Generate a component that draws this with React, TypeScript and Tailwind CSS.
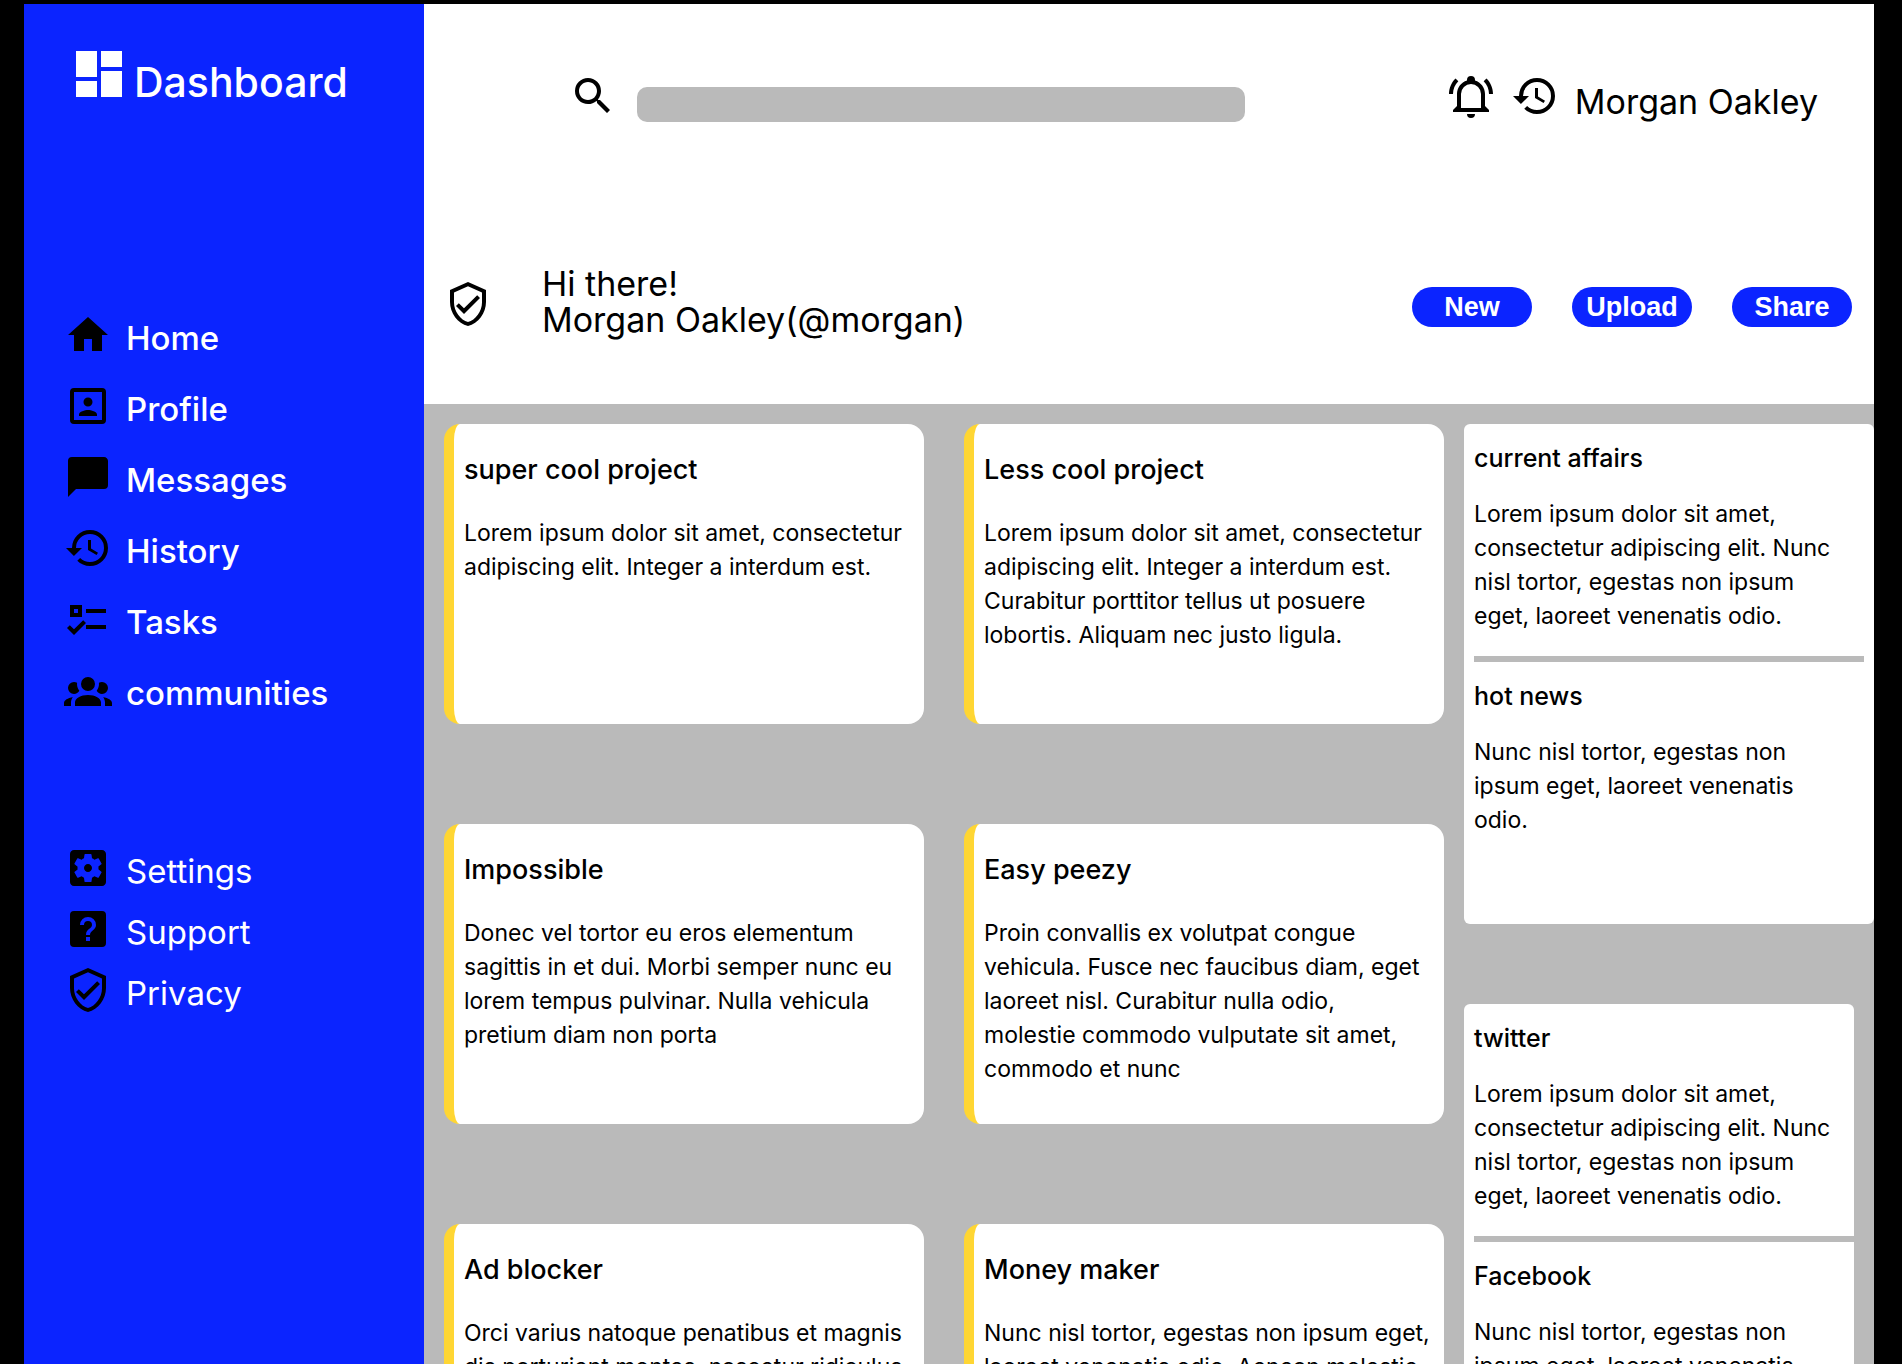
const icons = {
  home: "M10,20V14H14V20H19V12H22L12,3L2,12H5V20H10Z",
  profile:
    "M19,19H5V5H19M19,3H5A2,2 0 0,0 3,5V19A2,2 0 0,0 5,21H19A2,2 0 0,0 21,19V5A2,2 0 0,0 19,3M16.5,16.25C16.5,14.75 13.5,14 12,14C10.5,14 7.5,14.75 7.5,16.25V17H16.5M12,12.25A2.25,2.25 0 0,0 14.25,10A2.25,2.25 0 0,0 12,7.75A2.25,2.25 0 0,0 9.75,10A2.25,2.25 0 0,0 12,12.25Z",
  message: "M20,2H4A2,2 0 0,0 2,4V22L6,18H20A2,2 0 0,0 22,16V4C22,2.89 21.1,2 20,2Z",
  history:
    "M13.5,8H12V13L16.28,15.54L17,14.33L13.5,12.25V8M13,3A9,9 0 0,0 4,12H1L4.96,16.03L9,12H6A7,7 0 0,1 13,5A7,7 0 0,1 20,12A7,7 0 0,1 13,19C11.07,19 9.32,18.21 8.06,16.94L6.64,18.36C8.27,20 10.5,21 13,21A9,9 0 0,0 22,12A9,9 0 0,0 13,3",
  tasks:
    "M3,5H9V11H3V5M5,7V9H7V7H5M11,7H21V9H11V7M11,15H21V17H11V15M5,20L1.5,16.5L2.91,15.09L5,17.17L9.59,12.59L11,14L5,20Z",
  group:
    "M12,5.5A3.5,3.5 0 0,1 15.5,9A3.5,3.5 0 0,1 12,12.5A3.5,3.5 0 0,1 8.5,9A3.5,3.5 0 0,1 12,5.5M5,8C5.56,8 6.08,8.15 6.53,8.42C6.38,9.85 6.8,11.27 7.66,12.38C7.16,13.34 6.16,14 5,14A3,3 0 0,1 2,11A3,3 0 0,1 5,8M19,8A3,3 0 0,1 22,11A3,3 0 0,1 19,14C17.84,14 16.84,13.34 16.34,12.38C17.2,11.27 17.62,9.85 17.47,8.42C17.92,8.15 18.44,8 19,8M5.5,18.25C5.5,16.18 8.41,14.5 12,14.5C15.59,14.5 18.5,16.18 18.5,18.25V20H5.5V18.25M0,20V18.5C0,17.11 1.89,15.94 4.45,15.6C3.86,16.28 3.5,17.22 3.5,18.25V20H0M24,20H20.5V18.25C20.5,17.22 20.14,16.28 19.55,15.6C22.11,15.94 24,17.11 24,18.5V20Z",
  settings:
    "M12 10c-1.1 0-2 .9-2 2s.9 2 2 2 2-.9 2-2-.9-2-2-2zm7-7H5c-1.11 0-2 .9-2 2v14c0 1.1.89 2 2 2h14c1.11 0 2-.9 2-2V5c0-1.1-.89-2-2-2zm-1.75 9c0 .23-.02.46-.05.68l1.48 1.16c.13.11.17.3.08.45l-1.4 2.42c-.09.15-.27.21-.43.15l-1.74-.7c-.36.28-.76.51-1.18.69l-.26 1.85c-.03.17-.18.3-.35.3h-2.8c-.17 0-.32-.13-.35-.29l-.26-1.85c-.43-.18-.82-.41-1.18-.69l-1.74.7c-.16.06-.34 0-.43-.15l-1.4-2.42c-.09-.15-.05-.34.08-.45l1.48-1.16c-.03-.23-.05-.46-.05-.69 0-.23.02-.46.05-.68l-1.48-1.16c-.13-.11-.17-.3-.08-.45l1.4-2.42c.09-.15.27-.21.43-.15l1.74.7c.36-.28.76-.51 1.18-.69l.26-1.85c.03-.17.18-.3.35-.3h2.8c.17 0 .32.13.35.29l.26 1.85c.43.18.82.41 1.18.69l1.74-.7c.16-.06.34 0 .43.15l1.4 2.42c.09.15.05.34-.08.45l-1.48 1.16c.03.23.05.46.05.69z",
  help: "M11,18H13V16H11V18M12,6A4,4 0 0,0 8,10H10A2,2 0 0,1 12,8A2,2 0 0,1 14,10C14,12 11,11.75 11,15H13C13,12.75 16,12.5 16,10A4,4 0 0,0 12,6M5,3H19A2,2 0 0,1 21,5V19A2,2 0 0,1 19,21H5A2,2 0 0,1 3,19V5A2,2 0 0,1 5,3Z",
  shield:
    "M21,11C21,16.55 17.16,21.74 12,23C6.84,21.74 3,16.55 3,11V5L12,1L21,5V11M12,21C15.75,20 19,15.54 19,11.22V6.3L12,3.18L5,6.3V11.22C5,15.54 8.25,20 12,21M10,17L6,13L7.41,11.59L10,14.17L16.59,7.58L18,9",
  search:
    "M9.5,3A6.5,6.5 0 0,1 16,9.5C16,11.11 15.41,12.59 14.44,13.73L14.71,14H15.5L20.5,19L19,20.5L14,15.5V14.71L13.73,14.44C12.59,15.41 11.11,16 9.5,16A6.5,6.5 0 0,1 3,9.5A6.5,6.5 0 0,1 9.5,3M9.5,5C7,5 5,7 5,9.5C5,12 7,14 9.5,14C12,14 14,12 14,9.5C14,7 12,5 9.5,5Z",
  bell: "M10,21H14A2,2 0 0,1 12,23A2,2 0 0,1 10,21M21,19V20H3V19L5,17V11C5,7.9 7.03,5.17 10,4.29C10,4.19 10,4.1 10,4A2,2 0 0,1 12,2A2,2 0 0,1 14,4C14,4.1 14,4.19 14,4.29C16.97,5.17 19,7.9 19,11V17L21,19M17,11A5,5 0 0,0 12,6A5,5 0 0,0 7,11V18H17V11M19.75,3.19L18.33,4.61C20.04,6.3 21,8.6 21,11H23C23,8.07 21.84,5.25 19.75,3.19M1,11H3C3,8.6 3.96,6.3 5.67,4.61L4.25,3.19C2.16,5.25 1,8.07 1,11Z",
};

type IconName = keyof typeof icons;

function Icon({ name }: { name: IconName }) {
  return (
    <svg viewBox="0 0 24 24" className="size-12 shrink-0" fill="currentColor" aria-hidden="true">
      <path fillRule="evenodd" d={icons[name]} />
    </svg>
  );
}

const mainLinks: { icon: IconName; label: string }[] = [
  { icon: "home", label: "Home" },
  { icon: "profile", label: "Profile" },
  { icon: "message", label: "Messages" },
  { icon: "history", label: "History" },
  { icon: "tasks", label: "Tasks" },
  { icon: "group", label: "communities" },
];

const moreLinks: { icon: IconName; label: string }[] = [
  { icon: "settings", label: "Settings" },
  { icon: "help", label: "Support" },
  { icon: "shield", label: "Privacy" },
];

const projects = [
  {
    title: "super cool project",
    text: "Lorem ipsum dolor sit amet, consectetur adipiscing elit. Integer a interdum est.",
  },
  {
    title: "Less cool project",
    text: "Lorem ipsum dolor sit amet, consectetur adipiscing elit. Integer a interdum est. Curabitur porttitor tellus ut posuere lobortis. Aliquam nec justo ligula.",
  },
  {
    title: "Impossible",
    text: "Donec vel tortor eu eros elementum sagittis in et dui. Morbi semper nunc eu lorem tempus pulvinar. Nulla vehicula pretium diam non porta",
  },
  {
    title: "Easy peezy",
    text: "Proin convallis ex volutpat congue vehicula. Fusce nec faucibus diam, eget laoreet nisl. Curabitur nulla odio, molestie\u00a0commodo vulputate sit amet, commodo et nunc",
  },
  {
    title: "Ad blocker",
    text: "Orci varius natoque penatibus et magnis dis parturient montes, nascetur ridiculus",
  },
  {
    title: "Money maker",
    text: "Nunc nisl tortor, egestas non ipsum eget, laoreet venenatis odio. Aenean molestie",
  },
];

function NavLink({ icon, label, strong }: { icon: IconName; label: string; strong?: boolean }) {
  return (
    <a href="#" className="flex items-center gap-[14px]">
      <Icon name={icon} />
      <span className={`pt-[5px] text-[33px] leading-9 text-white ${strong ? "font-medium" : ""}`}>{label}</span>
    </a>
  );
}

function Project({ title, text }: { title: string; text: string }) {
  return (
    <article className="h-[300px] overflow-hidden rounded-2xl border-l-[10px] border-[#ffd633] bg-white pt-[26px] pr-2 pl-[10px]">
      <h2 className="text-[27px] leading-10 font-medium">{title}</h2>
      <p className="mt-[26px] text-[23px] leading-[34px]">{text}</p>
    </article>
  );
}

function Story({ title, text }: { title: string; text: string }) {
  return (
    <section className="pt-4 pr-3">
      <h2 className="text-[25px] leading-9 font-medium">{title}</h2>
      <p className="mt-[21px] text-[23px] leading-[34px]">{text}</p>
    </section>
  );
}

export default function App() {
  return (
    <div className="flex h-screen overflow-hidden bg-black pt-1 pr-7 pl-6 font-['Inter',sans-serif] text-black">
      <nav className="w-[400px] shrink-0 bg-[#0b24ff] pl-10">
        <div className="flex h-[140px] items-center gap-3 pl-3">
          <svg viewBox="0 0 46 46" className="size-[46px]" fill="white" aria-hidden="true">
            <path d="M0 0h21v26H0zM25 0h21v16H25zM0 30h21v16H0zM25 20h21v26H25z" />
          </svg>
          <h1 className="pt-4 text-[41px] leading-10 font-medium text-white">Dashboard</h1>
        </div>
        <div className="mt-[167px] flex flex-col gap-[23px]">
          {mainLinks.map((l) => (
            <NavLink key={l.label} {...l} strong />
          ))}
        </div>
        <div className="mt-[130px] flex flex-col gap-[13px]">
          {moreLinks.map((l) => (
            <NavLink key={l.label} {...l} />
          ))}
        </div>
      </nav>

      <main className="flex min-w-0 flex-1 flex-col bg-[#bababa]">
        <header className="h-[400px] shrink-0 bg-white">
          <div className="flex items-start pt-[68px] pr-[56px] pl-[145px]">
            <label htmlFor="search" aria-label="Search">
              <Icon name="search" />
            </label>
            <input
              id="search"
              type="text"
              className="mt-[15px] ml-5 h-[35px] w-[608px] min-w-0 rounded-[10px] bg-[#bababa] px-3 text-[23px] outline-none"
            />
            <div className="ml-auto flex items-start gap-4">
              <Icon name="bell" />
              <Icon name="history" />
              <span className="mt-3 text-[34px] leading-9 whitespace-nowrap">Morgan Oakley</span>
            </div>
          </div>
          <div className="mt-[144px] flex items-center pr-[22px] pl-5">
            <div className="pt-1">
              <Icon name="shield" />
            </div>
            <p className="ml-[50px] text-[34px] leading-9">
              Hi there!
              <br />
              Morgan Oakley(@morgan)
            </p>
            <div className="ml-auto flex gap-10 pt-[10px]">
              {["New", "Upload", "Share"].map((b) => (
                <button
                  key={b}
                  type="button"
                  className="h-10 w-[120px] rounded-full bg-[#0b24ff] font-['Liberation_Sans',sans-serif] text-[27px] leading-8 font-bold text-white"
                >
                  {b}
                </button>
              ))}
            </div>
          </div>
        </header>

        <div className="flex gap-5 pt-5 pl-5">
          <div className="grid flex-1 grid-cols-2 content-start gap-x-10 gap-y-[100px]">
            {projects.map((p) => (
              <Project key={p.title} {...p} />
            ))}
          </div>
          <aside className="flex w-[410px] shrink-0 flex-col gap-20">
            <div className="h-[500px] rounded-md bg-white px-[10px]">
              <Story
                title="current affairs"
                text="Lorem ipsum dolor sit amet, consectetur adipiscing elit. Nunc nisl tortor, egestas non ipsum eget, laoreet venenatis odio."
              />
              <hr className="mt-[23px] border-t-[6px] border-[#bababa]" />
              <Story title="hot news" text="Nunc nisl tortor, egestas non ipsum eget, laoreet venenatis odio." />
            </div>
            <div className="mr-5 h-[500px] rounded-md bg-white pl-[10px]">
              <Story
                title="twitter"
                text="Lorem ipsum dolor sit amet, consectetur adipiscing elit. Nunc nisl tortor, egestas non ipsum eget, laoreet venenatis odio."
              />
              <hr className="mt-[23px] border-t-[6px] border-[#bababa]" />
              <Story title="Facebook" text="Nunc nisl tortor, egestas non ipsum eget, laoreet venenatis odio." />
            </div>
          </aside>
        </div>
      </main>
    </div>
  );
}
